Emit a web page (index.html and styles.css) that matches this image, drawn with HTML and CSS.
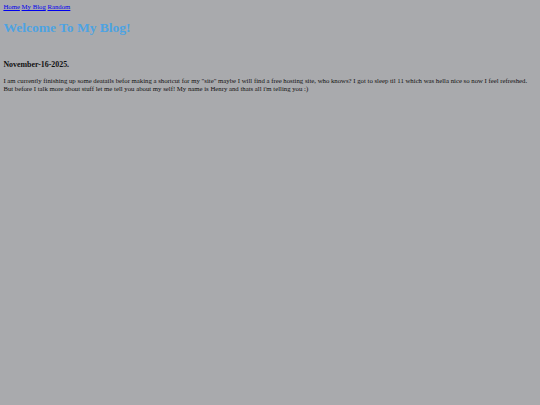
FILE: index.html
```html
<!DOCTYPE html>
<html>
<head>
<meta charset="utf-8">
<title>Welcome To My Blog!</title>
<link rel="stylesheet" href="styles.css">
</head>
<body>
<nav class="nav"><a href="#">Home</a> <a href="#">My Blog</a> <a href="#">Random</a></nav>
<h1 class="title">Welcome To My Blog!</h1>
<h3 class="date">November-16-2025.</h3>
<p class="post">I am currently finishing up some deatails befor making a shortcut for my "site" maybe I will find a free hosting site, who knows? I got to sleep til 11 which was hella nice so now I feel refreshed. But before I talk more about stuff let me tell you about my self! My name is Henry and thats all i'm telling you :)</p>
</body>
</html>
```
FILE: styles.css
```css
html {
  background: #a9aaad;
}
body {
  margin: 3px 3.4px;
  font-family: "Liberation Serif", "Times New Roman", serif;
  font-size: 6.75px;
  color: #111;
}
.nav a {
  color: #0000ee;
}
.title {
  color: #4da3e2;
  font-size: 13.5px;
  margin: 9.5px 0 0;
}
.date {
  font-size: 7.9px;
  margin: 24.5px 0 0;
}
.post {
  margin: 7.6px 0 0;
  line-height: 8px;
}
```
